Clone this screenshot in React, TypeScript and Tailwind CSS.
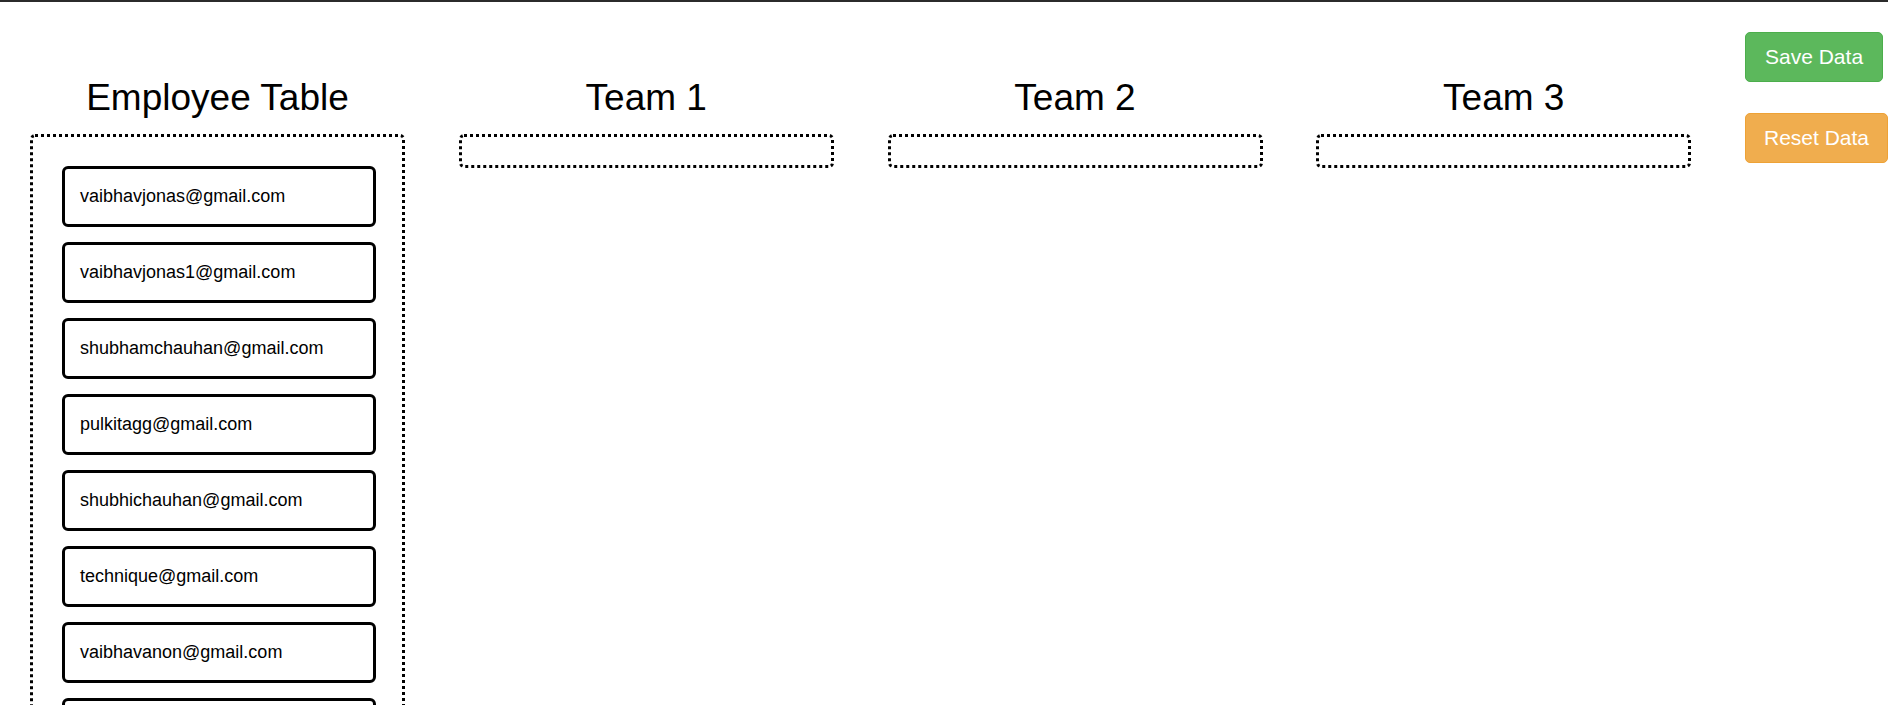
const employees = [
  "vaibhavjonas@gmail.com",
  "vaibhavjonas1@gmail.com",
  "shubhamchauhan@gmail.com",
  "pulkitagg@gmail.com",
  "shubhichauhan@gmail.com",
  "technique@gmail.com",
  "vaibhavanon@gmail.com",
  "ankitsharma@gmail.com",
  "rohitverma@gmail.com",
];

const teams = ["Team 1", "Team 2", "Team 3"];

const EmployeeCard = ({ email }: { email: string }) => {
  return (
    <div className="w-[314px] border-[3px] border-black rounded-[6px] bg-white pl-[15px] py-[17px] text-[18px] leading-[21px] text-black cursor-move">
      {email}
    </div>
  );
};

const Column = ({
  title,
  children,
}: {
  title: string;
  children?: React.ReactNode;
}) => {
  return (
    <div className="flex flex-col w-[375px]">
      <h2 className="text-center text-[37px] leading-[41px] font-normal text-black mb-[16px] whitespace-nowrap">
        {title}
      </h2>
      <div className="border-[3px] border-dotted border-black rounded-[5px] min-h-[34px] py-[14px]">
        {children}
      </div>
    </div>
  );
};

export default function App() {
  return (
    <div
      className="h-screen overflow-hidden bg-white"
      style={{ fontFamily: '"Liberation Sans", Arial, sans-serif' }}
    >
      <div className="h-[2px] bg-[#2b2b2b]" />
      <div className="flex">
        <div className="flex-1 grid grid-cols-4 pl-[30px] pt-[75px]">
          <Column title="Employee Table">
            <div className="flex flex-col gap-[15px] pl-[29px] pt-[15px]">
              {employees.map((email) => (
                <EmployeeCard key={email} email={email} />
              ))}
            </div>
          </Column>
          {teams.map((team) => (
            <Column key={team} title={team} />
          ))}
        </div>
        <div className="w-[143px] flex flex-col items-start gap-[31px] pt-[30px]">
          <button className="h-[50px] px-[19px] rounded-[5px] border border-[#4cae4c] bg-[#5cb85c] text-white text-[21px] leading-[24px] whitespace-nowrap">
            Save Data
          </button>
          <button className="h-[50px] w-[143px] px-0 rounded-[5px] border border-[#eea236] bg-[#f0ad4e] text-white text-[21px] leading-[24px] whitespace-nowrap">
            Reset Data
          </button>
        </div>
      </div>
    </div>
  );
}
